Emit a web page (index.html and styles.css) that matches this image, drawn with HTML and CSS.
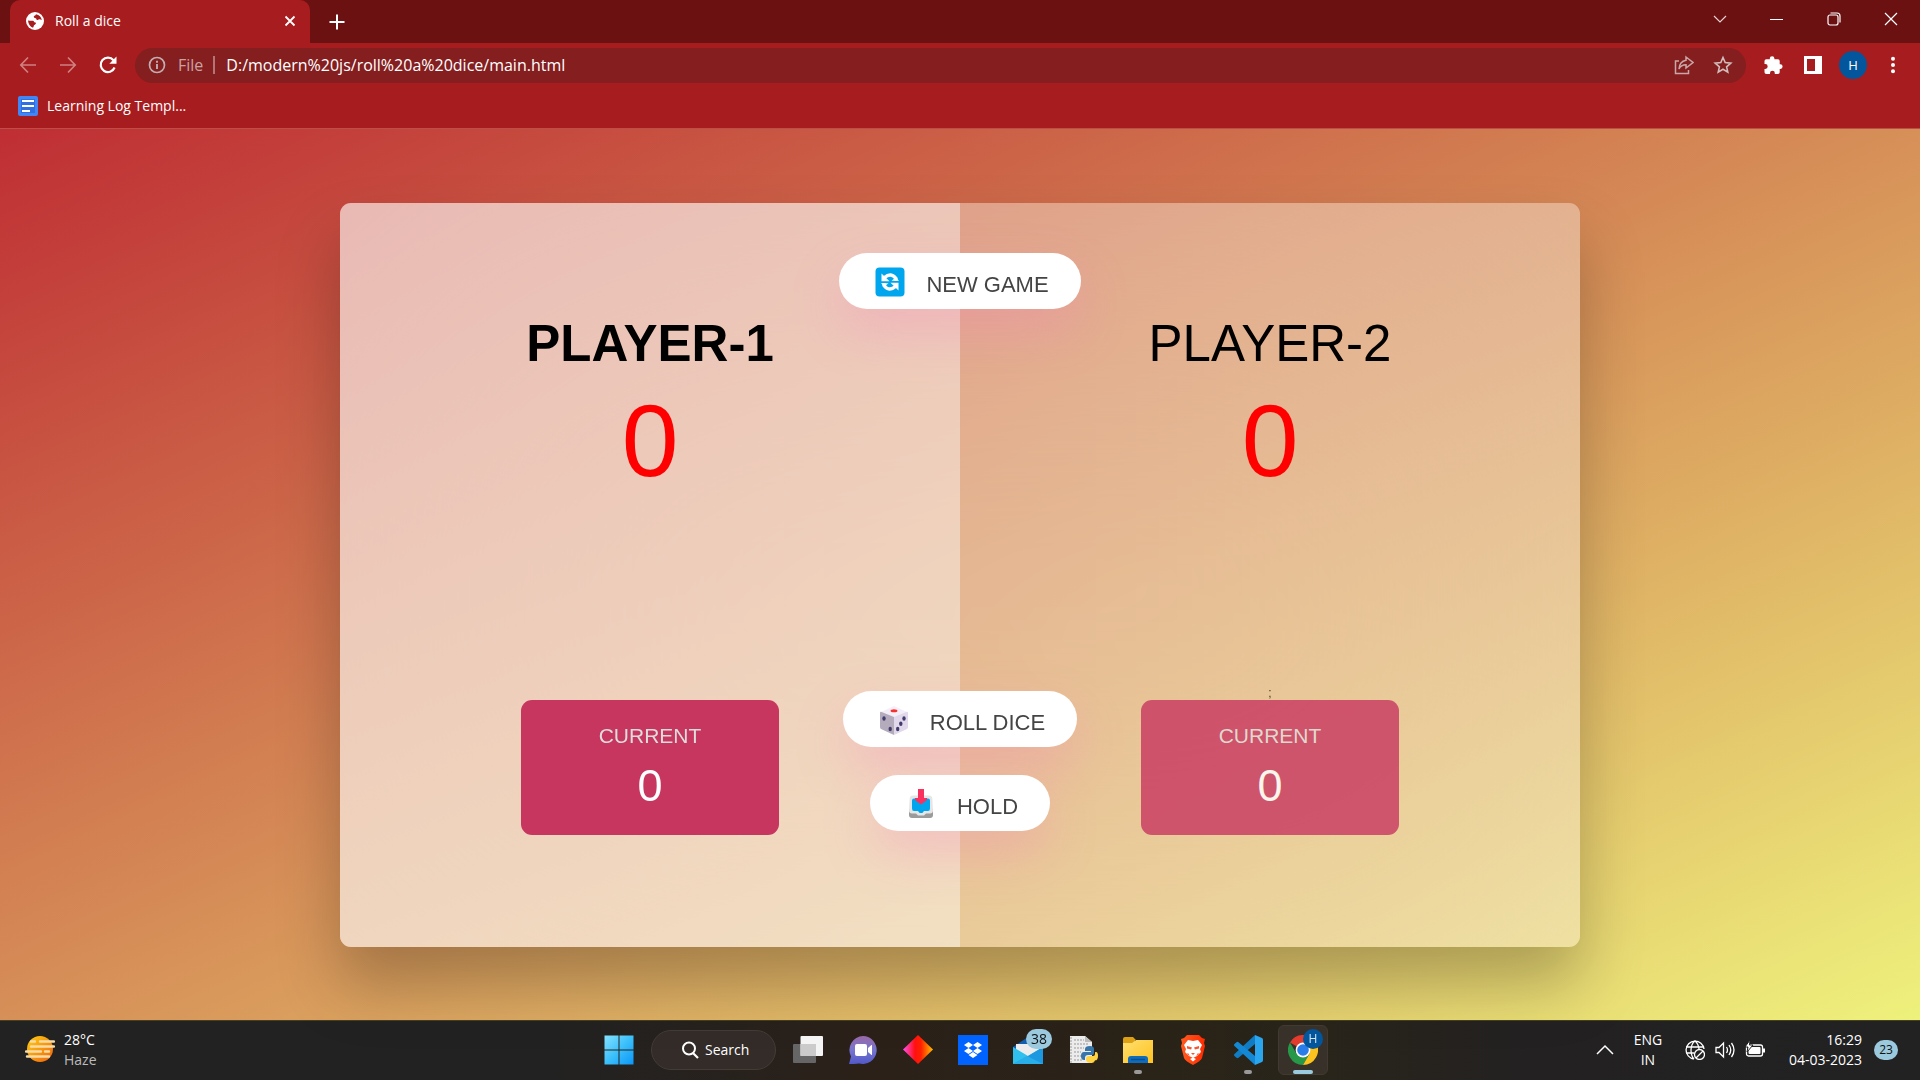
FILE: index.html
```html
<!DOCTYPE html>
<html lang="en">
<head>
<meta charset="utf-8">
<title>Roll a dice</title>
<link rel="stylesheet" href="styles.css">
</head>
<body>
<div class="screen">
  <header class="browser">
    <div class="tabstrip">
      <div class="tab">
        <svg class="i18" viewBox="0 0 18 18"><circle cx="9" cy="9" r="9" fill="#fff"/><path d="M2 8.500q3 .4 5 .2q1 .3 1.200 1.600q1.600-.2 1.800 1.300q-.8 1.400-2 1.600q-.4 1.500-1 2.600Q2.500 14 2 8.500zM10 2.200q-.4 1.600-2.200 1.800q-.2 1.900 1.200 2q1.500.2 1.600 1.800q1.400.5 2.300-.5q1.300-.2 2.900.7Q15 3.500 10 2.200z" fill="#a71c1e"/></svg>
        <span class="tab-title">Roll a dice</span>
        <button class="bare" aria-label="Close tab"><svg class="i18" viewBox="0 0 18 18"><path d="M4.500 4.500l9 9m0-9l-9 9" stroke="#fff" stroke-width="1.800"/></svg></button>
      </div>
      <button class="bare new-tab" aria-label="New tab"><svg class="i18" viewBox="0 0 18 18"><path d="M9 1.500v15M1.500 9h15" stroke="#fff" stroke-width="2"/></svg></button>
      <div class="window-buttons">
        <button class="bare" aria-label="Search tabs"><svg class="i18" viewBox="0 0 18 18"><path d="M3 6l6 6 6-6" fill="none" stroke="#e6d0d0" stroke-width="1.200"/></svg></button>
        <button class="bare" aria-label="Minimize"><svg class="i18" viewBox="0 0 18 18"><path d="M2 9.500h13" stroke="#fff"/></svg></button>
        <button class="bare" aria-label="Restore"><svg class="i18" viewBox="0 0 18 18"><g fill="none" stroke="#fff" stroke-width="1.200"><rect x="3" y="5" width="10" height="10" rx="2"/><path d="M5.500 3H12q3 0 3 3v6.500"/></g></svg></button>
        <button class="bare" aria-label="Close window"><svg class="i18" viewBox="0 0 18 18"><path d="M3 3l12 12m0-12L3 15" stroke="#fff" stroke-width="1.200"/></svg></button>
      </div>
    </div>
    <div class="toolbar">
      <div class="nav">
        <button class="bare" aria-label="Back"><svg class="i20" viewBox="0 0 20 20"><path d="M18 10H3m7-7.500L2.800 10l7.200 7.500" fill="none" stroke="#d08081" stroke-width="1.700"/></svg></button>
        <button class="bare" aria-label="Forward"><svg class="i20" viewBox="0 0 20 20"><path d="M2 10h15m-7-7.500l7.200 7.500-7.200 7.500" fill="none" stroke="#d08081" stroke-width="1.700"/></svg></button>
        <button class="bare" aria-label="Reload"><svg class="i20" viewBox="0 0 20 20"><path d="M16.600 12.500A7.200 7.200 0 1 1 15.500 5.300" fill="none" stroke="#fff" stroke-width="2.200"/><path d="M18.500 1.500v7.200h-7.200z" fill="#fff"/></svg></button>
      </div>
      <div class="address">
        <svg class="i18" viewBox="0 0 18 18"><circle cx="9" cy="9" r="7.500" fill="none" stroke="#c3adaf" stroke-width="1.700"/><path d="M9 8v5M9 4.800v1.900" stroke="#c3adaf" stroke-width="1.900"/></svg>
        <span class="scheme">File</span>
        <input class="url" aria-label="Address" value="D:/modern%20js/roll%20a%20dice/main.html">
        <button class="bare" aria-label="Share"><svg class="i20" viewBox="0 0 20 20"><g fill="none" stroke="#c9a6a7" stroke-width="1.500"><path d="M5 6H1.500v12.500h13V15"/><path d="M12 2l7 5.500-7 5.500v-3.200q-5 0-7 4.200.5-7.500 7-8.700z"/></g></svg></button>
        <button class="bare" aria-label="Bookmark"><svg class="i20" viewBox="0 0 20 20"><path d="M10 2.500l2.200 5.100 5.600.5-4.200 3.700 1.200 5.400L10 14.300l-4.800 2.900 1.200-5.400-4.200-3.700 5.600-.5z" fill="none" stroke="#d3bcbc" stroke-width="1.600"/></svg></button>
      </div>
      <div class="extensions">
        <button class="bare" aria-label="Extensions"><svg class="i20" viewBox="0 0 20 20"><path d="M1.500 6q0-1.800 1.800-1.800h3.500V3.500a2.300 2.300 0 0 1 4.600 0v.7H15q1.700 0 1.700 1.800v3.300h.6a2.300 2.300 0 0 1 0 4.600h-.6v3.300q0 1.700-1.700 1.700h-3.200v-.8a2.400 2.400 0 0 0-4.800 0v.8H3.300q-1.800 0-1.800-1.700v-3.300h.8a2.400 2.400 0 0 0 0-4.800h-.8z" fill="#fff"/></svg></button>
        <button class="bare" aria-label="Side panel"><svg class="i20" viewBox="0 0 20 20"><path d="M1 1h18v18H1zM4 4v12h8V4z" fill="#fff" fill-rule="evenodd"/></svg></button>
        <button class="avatar">H</button>
        <button class="bare" aria-label="Menu"><svg class="i20" viewBox="0 0 20 20"><g fill="#fff"><circle cx="10" cy="3.800" r="2"/><circle cx="10" cy="10" r="2"/><circle cx="10" cy="16.200" r="2"/></g></svg></button>
      </div>
    </div>
    <nav class="bookmarks">
      <a class="bookmark" href="#">
        <svg class="i20" viewBox="0 0 20 20"><rect width="20" height="20" rx="2" fill="#4285f4"/><path d="M3 3h14v14H3z" fill="#2f6fe0"/><path d="M4 5h12M4 10h12M4 15h8" stroke="#fff" stroke-width="2.200"/></svg>
        Learning Log Templ...
      </a>
    </nav>
  </header>

  <div class="page">
    <main class="board">
      <section class="player active">
        <h2 class="name">PLAYER-1</h2>
        <p class="score">0</p>
        <div class="current">
          <p class="current-label">CURRENT</p>
          <p class="current-score">0</p>
        </div>
      </section>
      <section class="player">
        <h2 class="name">PLAYER-2</h2>
        <p class="score">0</p>
        <span class="stray">;</span>
        <div class="current">
          <p class="current-label">CURRENT</p>
          <p class="current-score">0</p>
        </div>
      </section>
      <div class="controls">
        <button class="btn">
          <svg class="i30" viewBox="0 0 30 30"><rect x=".5" y=".5" width="29" height="29" rx="4" fill="#00a6ed"/><g fill="none" stroke="#fff" stroke-width="3.400"><path d="M9.500 10.500Q16 5 21 11.500V14"/><path d="M20.500 19.500Q14 25 9 18.500V16"/></g><path d="M6.500 6.500v7.800h8zM23.500 23.500v-7.800h-8zM16.500 13.800h7.600l-3.400-3.300zM13.500 16.200H5.900l3.400 3.300z" fill="#fff"/></svg>
          <span>NEW GAME</span>
        </button>
        <button class="btn roll">
          <svg class="i30" viewBox="0 0 30 30"><path d="M1 7.500L15 1l14 6.500L15 13z" fill="#f3eef8"/><path d="M1 7.500q0-1 1-.8L15 12v18L2 24q-1-.6-1-2z" fill="#b4acbc"/><path d="M29 7.500q0-1-1-.8L15 12v18l13-6q1-.6 1-2z" fill="#e1d8ec"/><ellipse cx="15" cy="5.800" rx="3.400" ry="1.500" fill="#f8312f"/><g fill="#433b6b"><ellipse cx="5" cy="13.500" rx="1.700" ry="2.200"/><ellipse cx="11.200" cy="24" rx="1.700" ry="2.200"/><ellipse cx="25" cy="13.500" rx="1.700" ry="2.200"/><ellipse cx="21.800" cy="18.700" rx="1.700" ry="2.200"/><ellipse cx="18.700" cy="24" rx="1.700" ry="2.200"/></g></svg>
          <span>ROLL DICE</span>
        </button>
        <button class="btn">
          <svg class="i30" viewBox="0 0 30 30"><path d="M3 20h24v6q0 3-3 3H6q-3 0-3-3z" fill="#9b9b9b"/><path d="M7 6.500h16q3 0 3.300 3l.7 12q0 3-3 3h-4l-2 2h-6l-2-2H6q-3 0-3-3l.7-12q.3-3 3.300-3z" fill="#e6e6e6"/><path d="M8 9.500h14q2 0 2 2v8q0 2.500-2 2.500h-4l-1.600 2h-2.800L12 22H8q-2 0-2-2.500v-8q0-2 2-2z" fill="#00a6ed"/><path d="M12 0h6v9h3v2l-6 4.500L9 11V9h3z" fill="#f8315f"/></svg>
          <span>HOLD</span>
        </button>
      </div>
    </main>
  </div>

  <footer class="taskbar">
    <div class="weather">
      <svg class="i30" viewBox="0 0 30 30"><defs><linearGradient id="sun" x1="0" y1="0" x2="1" y2="1"><stop offset="0" stop-color="#ffcf10"/><stop offset="1" stop-color="#ee6210"/></linearGradient></defs><circle cx="15" cy="14" r="13" fill="url(#sun)"/><g stroke="#f7dca6" stroke-width="2.400" stroke-linecap="round"><path d="M6 6.500h4M15 6.500h14M6 11.500h23M1 16.500h15M20 16.500h4M2 21.500h22"/></g></svg>
      <div class="lines"><span>28°C</span><span class="dim">Haze</span></div>
    </div>
    <div class="apps">
      <button class="app" aria-label="Start"><svg class="i30" viewBox="0 0 30 30"><defs><linearGradient id="win" x1="0" y1="0" x2="1" y2="1"><stop offset="0" stop-color="#86e2ff"/><stop offset=".5" stop-color="#3cc0fb"/><stop offset="1" stop-color="#0b96f8"/></linearGradient></defs><path d="M.5.500h14v14H.5zM15.500.500h14v14h-14zM.5 15.500h14v14H.5zM15.500 15.500h14v14h-14z" fill="url(#win)"/></svg></button>
      <button class="search"><svg class="i18" viewBox="0 0 18 18"><circle cx="8" cy="7.500" r="6" fill="none" stroke="#fff" stroke-width="2"/><path d="M12 12l5 5" stroke="#fff" stroke-width="2.200"/></svg>Search</button>
      <button class="app" aria-label="Task view"><svg class="i30" viewBox="0 0 30 30"><rect y="9" width="23" height="19" rx="1" fill="#666"/><rect x="7.500" y="1" width="22.500" height="20" rx="1" fill="#f4f4f4"/><rect x="7.500" y="9" width="15.500" height="12" fill="#cbcbcb"/></svg></button>
      <button class="app" aria-label="Chat"><svg class="i30" viewBox="0 0 30 30"><defs><linearGradient id="chat" x1="0" y1="0" x2="0" y2="1"><stop offset="0" stop-color="#9a68a6"/><stop offset=".5" stop-color="#7775cf"/><stop offset="1" stop-color="#5158c9"/></linearGradient></defs><path d="M15 1a14 14 0 1 1-4 27.500Q6 29 1 29l2-7.500A14 14 0 0 1 15 1z" fill="url(#chat)"/><rect x="7" y="9" width="12" height="12" rx="2" fill="#fff"/><path d="M20 13l3.500-3h.5v10h-.5l-3.500-3z" fill="#fff"/></svg></button>
      <button class="app" aria-label="Diamond"><svg class="i30" viewBox="0 0 30 30"><defs><linearGradient id="dia"><stop offset="0" stop-color="#ff50f0"/><stop offset=".4" stop-color="#ff1010"/><stop offset=".6" stop-color="#ff2000"/><stop offset="1" stop-color="#ffc000"/></linearGradient></defs><path d="M15 0l15 14.500L15 29 0 14.500z" fill="url(#dia)"/></svg></button>
      <button class="app" aria-label="Dropbox"><svg class="i30" viewBox="0 0 30 30"><path d="M0 0h30v30H0z" fill="#0062ff"/><path d="M10.500 7l4.500 3-4.500 3L6 10zM19.500 7l4.500 3-4.500 3-4.500-3zM10.500 13l4.500 3-4.500 3L6 16zM19.500 13l4.500 3-4.500 3-4.500-3zM15 17l4.500 3-4.500 3-4.500-3z" fill="#fff"/></svg></button>
      <button class="app" aria-label="Mail"><svg class="i30" viewBox="0 0 30 30"><path d="M0 12L15 2l15 10v6H0z" fill="#0f5fae"/><path d="M3 9h24v8L15 24 3 17z" fill="#ececec"/><path d="M0 12l15 9 15-9v17H0z" fill="#2fc0ee"/><path d="M0 29l15-8 15-9v17z" fill="#1b98e0"/><path d="M14 21l16 8H0z" fill="#2aaeea"/></svg><span class="badge">38</span></button>
      <button class="app" aria-label="Python file"><svg class="i30" viewBox="0 0 30 30"><path d="M2 1h15l7 6v21H2z" fill="#ececec"/><path d="M17 1v6h7z" fill="#bbb"/><path d="M3 2v26M6 5h10M6 9h14M6 13h10M6 17h7M6 21h8M6 25h9" stroke="#999" stroke-dasharray="2 1"/><path d="M22 11q-5 0-5 3v2h6v1h-7q-3 0-3 4t3 4h1v-2q0-3 3-3h4q2 0 2-2v-4q0-3-4-3z" fill="#3776ab"/><path d="M23 27q5 0 5-3v-2h-6v-1h5q0-4 1-4 2 0 2 4t-3 5q-1 1-4 1zm-5-3q0-3 3-3h4q2 0 2-2v-2q3 0 3 4t-3 4q0 3-4 3t-5-3z" fill="#ffd343"/></svg></button>
      <button class="app" aria-label="Files"><svg class="i30" viewBox="0 0 30 30"><defs><linearGradient id="fol" x1="0" y1="0" x2="1" y2="1"><stop offset="0" stop-color="#ffdf70"/><stop offset="1" stop-color="#ffc21f"/></linearGradient></defs><path d="M0 4q0-2 2-2h8l3 3h-1v8H0z" fill="#dca017"/><path d="M0 8h9l4-3h17v23H0z" fill="url(#fol)"/><path d="M5 28v-4q0-3 3-3h14q3 0 3 3v4z" fill="#0f6cbd"/><path d="M8 24.500h14" stroke="#0a4f8c" stroke-width="1.500"/></svg><i class="dot"></i></button>
      <button class="app" aria-label="Brave"><svg class="i30" viewBox="0 0 30 30"><defs><linearGradient id="brv"><stop offset="0" stop-color="#ff5a1f"/><stop offset="1" stop-color="#ff2b00"/></linearGradient></defs><path d="M9 0h12l3 3 3 1-1 4 1 3-3 12q-1 3-9 7-8-4-9-7L3 11l1-3-1-4 3-1z" fill="url(#brv)"/><path d="M10 5l5 1 5-1 4 5-2 4 1 3-4 4-4 2-4-2-4-4 1-3-2-4z" fill="#fff"/><path d="M9 11l5 1.500-1 2-4-1zM21 11l-5 1.500 1 2 4-1zM13 18h4l-2 2zM10 18l2 3-3-2zM20 18l-2 3 3-2z" fill="#fb542b"/><path d="M12 24l3-1.500 3 1.500-3 2.500z" fill="#fff"/></svg></button>
      <button class="app" aria-label="Code editor"><svg class="i30" viewBox="0 0 30 30"><path d="M22 0l-20 18.500q-2 1.500 0 3l1.500 1.300q1 .7 2 0L22 9z" fill="#0f7cc4"/><path d="M22 30L2 11.500q-2-1.500 0-3l1.500-1.300q1-.7 2 0L22 21z" fill="#1488d4"/><path d="M22 0l7 3q1 .6 1 2v20q0 1.400-1 2l-7 3z" fill="#29a6ee"/></svg><i class="dot"></i></button>
      <button class="app current-app" aria-label="Chrome"><svg class="i30" viewBox="0 0 30 30"><path d="M15 15L2 7.500A15 15 0 0 1 28 7.500L15 8z" fill="#e33b2e"/><path d="M2 7.500A15 15 0 0 0 15 30l6.500-11.200L15 15 8.500 18.800z" fill="#279847"/><path d="M28 7.500A15 15 0 0 1 15 30l6.500-11.200L18 8z" fill="#fcc31e"/><circle cx="15" cy="15" r="7.400" fill="#fff"/><circle cx="15" cy="15" r="5.800" fill="#2a7de9"/></svg><span class="badge profile">H</span><i class="dot line"></i></button>
    </div>
    <div class="tray">
      <svg class="i20" viewBox="0 0 20 20"><path d="M2 14l8-8 8 8" fill="none" stroke="#fff" stroke-width="1.500"/></svg>
      <div class="lines lang"><span>ENG</span><span>IN</span></div>
      <div class="status">
        <svg class="i20" viewBox="0 0 20 20"><g fill="none" stroke="#fff" stroke-width="1.300"><path d="M9 19A9 9 0 1 1 19 9M1 7h17.500M1 13h8M10 1Q6 4 6 10t3 9M10 1q3.500 3 4 8"/><circle cx="14.500" cy="14.500" r="5"/><path d="M11 18l7-7"/></g></svg>
        <svg class="i20" viewBox="0 0 20 20"><path d="M1 7.500h3L8.500 3v14L4 12.500H1zM11.500 7q2 3 0 6M14 5q3.500 5 0 10M16.500 3q5 7 0 14" fill="none" stroke="#fff" stroke-width="1.300"/></svg>
        <svg class="i20" viewBox="0 0 20 20"><rect x="1.500" y="5" width="16" height="11" rx="2" fill="none" stroke="#fff" stroke-width="1.300"/><rect x="3.500" y="7" width="12" height="7" rx="1" fill="#fff"/><path d="M18 8.500h2v4h-2z" fill="#fff"/><path d="M5 0L0 7h3l-1 5 6-7H4.500z" fill="#fff" stroke="#222"/></svg>
      </div>
      <div class="lines clock"><span>16:29</span><span>04-03-2023</span></div>
      <span class="count">23</span>
    </div>
  </footer>
</div>
</body>
</html>
```
FILE: styles.css
```css
* { box-sizing: border-box; margin: 0; padding: 0; }
body { font-family: "Open Sans", "Noto Sans", sans-serif; font-size: 14px; color: #fff; }
button, input { font: inherit; color: inherit; border: 0; background: none; }
svg { display: block; flex: none; }
.i18 { width: 18px; height: 18px; }
.i20 { width: 20px; height: 20px; }
.i30 { width: 30px; height: 30px; }
.bare { display: block; flex: none; }

.screen { display: flex; flex-direction: column; min-height: 100vh; }

/* Browser frame */
.browser { background: #a71c1e; border-bottom: 1px solid #bc5048; }
.tabstrip { display: flex; align-items: center; height: 43px; padding-left: 10px; background: #6b1112; }
.tab { display: flex; align-items: center; gap: 11px; width: 300px; height: 43px; padding: 0 11px 2px 16px; border-radius: 10px 10px 0 0; background: #a71c1e; }
.tab-title { flex: 1; font-size: 14px; }
.new-tab { margin-left: 18px; }
.window-buttons { display: flex; gap: 39px; margin: 0 20px 6px auto; }
.toolbar { display: flex; align-items: center; height: 44px; padding: 0 17px 0 18px; }
.nav { display: flex; gap: 20px; margin-right: 17px; }
.address { display: flex; flex: 1; align-items: center; gap: 19px; height: 35px; padding: 0 13px; border-radius: 18px; background: #841e1f; }
.scheme { margin-left: -7px; padding-right: 10px; border-right: 2px solid #b47576; color: #c9a3a4; font-size: 16px; line-height: 18px; }
.url { flex: 1; min-width: 0; margin-left: -8px; font-size: 16px; }
.extensions { display: flex; align-items: center; gap: 20px; margin-left: 17px; }
.avatar { width: 28px; height: 28px; margin: 0 -4px; border-radius: 50%; background: #04569c; font-size: 13px; }
.bookmarks { display: flex; height: 41px; padding-left: 18px; }
.bookmark { display: flex; align-items: center; gap: 9px; height: 37px; color: #fff; font-size: 14px; text-decoration: none; }

/* Game */
.page { display: flex; flex: 1; align-items: center; justify-content: center; padding: 40px 0; background: linear-gradient(to bottom right, #bf2e34, #eef17c); font-family: "Liberation Sans", Arial, sans-serif; }
.board { position: relative; display: grid; grid-template-columns: 1fr 1fr; width: 1240px; max-width: 90%; min-height: 744px; overflow: hidden; border-radius: 11px; background: rgba(255, 255, 255, .35); backdrop-filter: blur(200px); box-shadow: 0 37px 62px rgba(0, 0, 0, .25); }
.player { display: flex; flex-direction: column; align-items: center; padding: 112px; color: #000; }
.active { background: rgba(255, 255, 255, .4); }
.name { font-size: 51px; font-weight: 400; line-height: 58px; white-space: nowrap; }
.active .name { font-weight: 700; }
.score { margin-top: 18px; color: #f00; font-size: 102px; line-height: 100px; }
.current { width: 65%; margin-top: auto; padding: 24px 0; border-radius: 11px; background: #c7365f; color: #fff; text-align: center; opacity: .8; }
.stray { margin-top: auto; font-size: 12px; line-height: 14px; opacity: .75; }
.stray + .current { margin-top: 0; }
.active .current { opacity: 1; }
.current-label { color: #ddd; font-size: 21px; line-height: 24px; }
.current-score { margin-top: 12px; font-size: 45px; line-height: 51px; }
.controls { position: absolute; inset: 0; display: flex; flex-direction: column; align-items: center; gap: 28px; padding: 50px 0 116px; pointer-events: none; }
.btn { display: flex; align-items: center; gap: 21px; height: 56px; padding: 2px 32px 0 36px; border-radius: 28px; background: #fff; box-shadow: 0 22px 50px rgba(245, 130, 190, .3); color: #444; font-size: 22px; line-height: 26px; pointer-events: auto; }
.btn span { padding-top: 6px; }
.roll { margin-top: auto; }

/* Taskbar */
.taskbar { display: grid; grid-template-columns: 1fr auto 1fr; align-items: center; height: 60px; padding: 0 0 2px 2px; border-top: 1px solid #47401f; background: linear-gradient(90deg, #222, #222 28%, #2b2119 45%, #2a2318 60%, #29251a 68%, #232122 80%, #222); }
.weather { display: flex; gap: 9px; align-items: center; padding-left: 23px; }
.lines { display: flex; flex-direction: column; line-height: 20px; }
.dim { color: #bbb; }
.apps { display: flex; align-items: center; gap: 5px; }
.app { position: relative; display: flex; align-items: center; justify-content: center; width: 50px; height: 50px; border-radius: 6px; }
.current-app { border: 1px solid #413a31; background: #37312a; }
.search { display: flex; align-items: center; gap: 6px; width: 125px; height: 40px; margin: 0 2px; padding-left: 29px; border: 1px solid #443b35; border-radius: 20px; background: #332c28; }
.badge { position: absolute; top: 4px; right: 1px; min-width: 26px; height: 20px; border-radius: 10px; background: #9bc9de; color: #111; font-size: 14px; line-height: 20px; }
.profile { top: 3px; right: 4px; min-width: 20px; background: #04569c; color: #d5e5f0; font-size: 12px; }
.dot { position: absolute; bottom: 1px; left: 21px; width: 8px; height: 4px; border-radius: 2px; background: #999; }
.line { bottom: 0; left: 14px; width: 20px; background: #9bc9de; }
.tray { display: flex; align-items: center; justify-content: flex-end; padding-right: 22px; }
.lang { width: 66px; text-align: center; }
.status { display: flex; gap: 10px; margin: 0 24px 0 4px; }
.clock { margin-right: 12px; text-align: right; }
.count { width: 24px; height: 20px; border-radius: 10px; background: #9bc9de; color: #111; font-size: 12px; line-height: 20px; text-align: center; }
```
